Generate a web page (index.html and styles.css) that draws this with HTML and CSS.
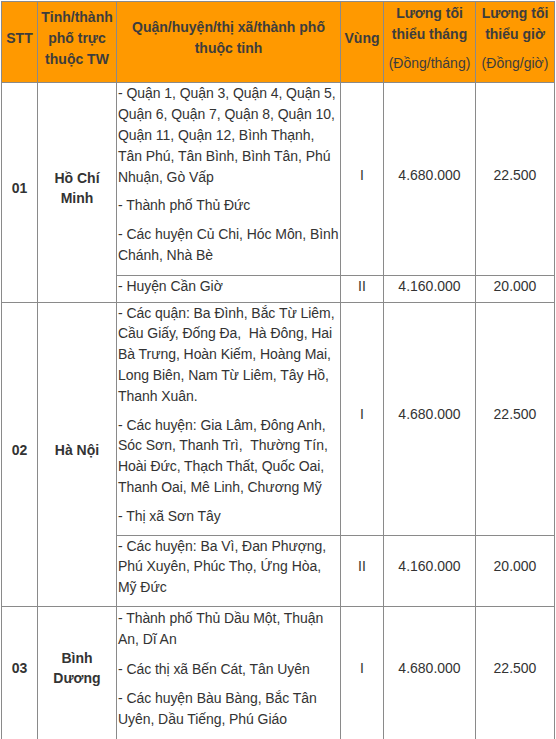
FILE: index.html
```html
<!DOCTYPE html>
<html lang="vi">
<head>
<meta charset="utf-8">
<title>Lương tối thiểu vùng</title>
<link rel="stylesheet" href="styles.css">
</head>
<body>
<table class="wage-table">
  <colgroup>
    <col class="c-stt">
    <col class="c-prov">
    <col class="c-dist">
    <col class="c-zone">
    <col class="c-month">
    <col class="c-hour">
  </colgroup>
  <thead>
    <tr>
      <th><p>STT</p></th>
      <th><p>Tỉnh/thành phố trực thuộc TW</p></th>
      <th><p>Quận/huyện/thị xã/thành phố thuộc tỉnh</p></th>
      <th><p>Vùng</p></th>
      <th><p>Lương tối thiểu tháng</p><p class="unit">(Đồng/tháng)</p></th>
      <th><p>Lương tối thiểu giờ</p><p class="unit">(Đồng/giờ)</p></th>
    </tr>
  </thead>
  <tbody>
    <tr class="first">
      <td class="num" rowspan="2"><p>01</p></td>
      <td class="prov" rowspan="2"><p>Hồ Chí Minh</p></td>
      <td class="dist">
        <p>- Quận 1, Quận 3, Quận 4, Quận 5, Quận 6, Quận 7, Quận 8, Quận 10, Quận 11, Quận 12, Bình Thạnh, Tân Phú, Tân Bình, Bình Tân, Phú Nhuận, Gò Vấp</p>
        <p>- Thành phố Thủ Đức</p>
        <p>- Các huyện Củ Chi, Hóc Môn, Bình Chánh, Nhà Bè</p>
      </td>
      <td class="val"><p>I</p></td>
      <td class="val"><p>4.680.000</p></td>
      <td class="val"><p>22.500</p></td>
    </tr>
    <tr class="short">
      <td class="dist"><p>- Huyện Cần Giờ</p></td>
      <td class="val"><p>II</p></td>
      <td class="val"><p>4.160.000</p></td>
      <td class="val"><p>20.000</p></td>
    </tr>
    <tr>
      <td class="num" rowspan="2"><p>02</p></td>
      <td class="prov" rowspan="2"><p>Hà Nội</p></td>
      <td class="dist">
        <p>- Các quận: Ba Đình, Bắc Từ Liêm, Cầu Giấy, Đống Đa, &nbsp;Hà Đông, Hai Bà Trưng, Hoàn Kiếm, Hoàng Mai, Long Biên, Nam Từ Liêm, Tây Hồ, Thanh Xuân.</p>
        <p>- Các huyện: Gia Lâm, Đông Anh, Sóc Sơn, Thanh Trì, &nbsp;Thường Tín, Hoài Đức, Thạch Thất, Quốc Oai, Thanh Oai, Mê Linh, Chương Mỹ</p>
        <p>- Thị xã Sơn Tây</p>
      </td>
      <td class="val"><p>I</p></td>
      <td class="val"><p>4.680.000</p></td>
      <td class="val"><p>22.500</p></td>
    </tr>
    <tr>
      <td class="dist"><p>- Các huyện: Ba Vì, Đan Phượng, Phú Xuyên, Phúc Thọ, Ứng Hòa, Mỹ Đức</p></td>
      <td class="val"><p>II</p></td>
      <td class="val"><p>4.160.000</p></td>
      <td class="val"><p>20.000</p></td>
    </tr>
    <tr class="loose">
      <td class="num"><p>03</p></td>
      <td class="prov"><p>Bình Dương</p></td>
      <td class="dist">
        <p>- Thành phố Thủ Dầu Một, Thuận An, Dĩ An</p>
        <p>- Các thị xã Bến Cát, Tân Uyên</p>
        <p>- Các huyện Bàu Bàng, Bắc Tân Uyên, Dầu Tiếng, Phú Giáo</p>
      </td>
      <td class="val"><p>I</p></td>
      <td class="val"><p>4.680.000</p></td>
      <td class="val"><p>22.500</p></td>
    </tr>
  </tbody>
</table>
</body>
</html>
```

FILE: styles.css
```css
html, body {
  margin: 0;
  padding: 0;
  background: #ffffff;
}

body {
  font-family: "Liberation Sans", Arial, sans-serif;
  font-size: 14px;
  line-height: 20.8px;
  color: #333333;
}

.wage-table {
  border-collapse: collapse;
  table-layout: fixed;
  width: 554px;
  margin: 1px 0 0 1px;
}

.c-stt { width: 36px; }
.c-prov { width: 79px; }
.c-dist { width: 224px; }
.c-zone { width: 43px; }
.c-month { width: 92px; }
.c-hour { width: 79px; }

.wage-table th,
.wage-table td {
  border: 1px solid #8a8a8a;
  padding: 0 1px;
  vertical-align: middle;
}

.wage-table p {
  margin: 0 0 8px;
}

.wage-table th {
  background: #ff9900;
  color: #3d3d3d;
  font-weight: bold;
  text-align: center;
  padding: 1px 1px;
}

.wage-table th .unit {
  font-weight: normal;
}

.wage-table td {
  text-align: center;
}

.wage-table td.dist {
  text-align: left;
  padding: 0 0 0 1px;
  letter-spacing: -0.06px;
}

.wage-table td.num,
.wage-table td.prov {
  font-weight: bold;
}

.wage-table tr.first td.dist {
  padding-bottom: 1px;
}

.wage-table tr.short p {
  margin-bottom: 5px;
}

.wage-table tr.loose td.dist {
  padding-top: 1px;
}

.wage-table tr.loose p {
  margin-bottom: 9px;
}
```
